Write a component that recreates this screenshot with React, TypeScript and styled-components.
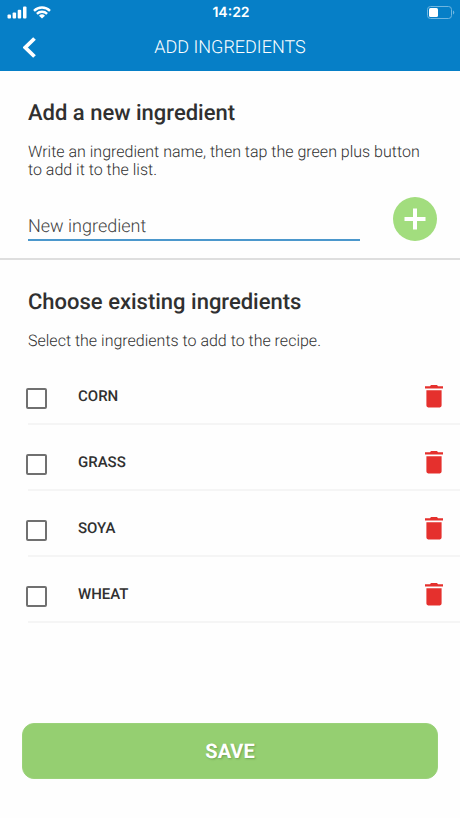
import { useState } from "react";
import type { FormEvent } from "react";
import styled, { createGlobalStyle } from "styled-components";

const GlobalStyle = createGlobalStyle`
  *, *::before, *::after { box-sizing: border-box; }
  body {
    margin: 0;
    background: #fefefe;
    color: #303030;
    font-family: Roboto, "Liberation Sans", sans-serif;
    text-rendering: geometricPrecision;
  }
  button, input { font: inherit; text-rendering: inherit; }
`;

const Screen = styled.div`
  display: flex;
  flex-direction: column;
  min-height: 100vh;
`;

const TopBar = styled.header`
  background: #067fc7;
  color: #fff;
`;

const StatusBar = styled.div`
  display: grid;
  grid-template-columns: 1fr auto 1fr;
  align-items: center;
  height: 24px;
  padding: 0 5px 0 7px;
`;

const Signals = styled.div`
  display: flex;
  align-items: center;
  gap: 6px;
`;

const Clock = styled.time`
  font-family: Inter, Roboto, sans-serif;
  font-size: 14px;
  font-weight: 600;
`;

const Battery = styled.svg`
  justify-self: end;
`;

const NavBar = styled.div`
  display: grid;
  grid-template-columns: 60px 1fr 60px;
  align-items: center;
  height: 47px;
`;

const IconButton = styled.button`
  display: flex;
  align-items: center;
  justify-content: center;
  padding: 0;
  border: 0;
  background: none;
  color: inherit;
  cursor: pointer;
`;

const BackButton = styled(IconButton)`
  height: 44px;
`;

const PageTitle = styled.h1`
  margin: 0;
  font-size: 18px;
  line-height: 22px;
  font-weight: 300;
  text-align: center;
`;

const Section = styled.section<{ $divided?: boolean }>`
  padding: 29px 0 ${(p) => (p.$divided ? 17 : 0)}px 28px;
  border-bottom: ${(p) => (p.$divided ? "2px solid #dedede" : "0")};
`;

const Heading = styled.h2`
  margin: 0;
  font-size: 22px;
  line-height: 28px;
  font-weight: 500;
`;

const Hint = styled.p`
  margin: 15px 36px 0 0;
  font-size: 16px;
  line-height: 18px;
  font-weight: 300;
`;

const AddForm = styled.form`
  display: flex;
  align-items: center;
  justify-content: space-between;
  gap: 33px;
  margin-top: 18px;
  padding-right: 23px;
`;

const NameInput = styled.input`
  flex: 1;
  min-width: 0;
  height: 44px;
  padding: 16px 0 0;
  border: 0;
  border-bottom: 2px solid #4b97cc;
  border-radius: 0;
  outline: 0;
  background: none;
  color: #303030;
  font-size: 18px;
  font-weight: 300;

  &::placeholder { color: #424242; opacity: 1; }
`;

const AddButton = styled(IconButton)`
  width: 44px;
  height: 44px;
  border-radius: 50%;
  background: #a2dd7e;
  color: #fff;
`;

const List = styled.ul`
  margin: 9px 0 0;
  padding: 0;
  list-style: none;
`;

const Row = styled.li`
  display: flex;
  align-items: center;
  height: 66px;
  padding: 10px 17px 0 0;
  border-bottom: 2px solid #f5f5f5;
`;

const RowLabel = styled.label`
  display: flex;
  flex: 1;
  align-items: center;
  gap: 31px;
  cursor: pointer;
`;

const Checkbox = styled.input`
  appearance: none;
  width: 21px;
  height: 21px;
  margin: 4px 0 0 -2px;
  border: 2px solid #707070;
  border-radius: 2px;
  background: #fff;

  &:checked { background: #067fc7; border-color: #067fc7; }
`;

const Name = styled.span`
  font-size: 15px;
  line-height: 22px;
  font-weight: 500;
`;

const DeleteButton = styled(IconButton)`
  width: 18px;
  height: 24px;
  color: #e5302d;
`;

const Footer = styled.footer`
  margin-top: auto;
  padding: 24px 22px 39px;
`;

const SaveButton = styled.button`
  width: 100%;
  height: 56px;
  padding: 0;
  border: 1px solid #9bd27a;
  border-radius: 12px;
  background: #95cf71;
  color: #fff;
  font-size: 20px;
  font-weight: 700;
  text-shadow: 1px 1px 2px rgba(60, 100, 40, 0.4);
  cursor: pointer;
`;

const SignalIcon = () => (
  <svg width="20" height="13" viewBox="0 0 20 13" fill="currentColor" aria-hidden="true">
    <rect x="0.5" y="8.5" width="3.5" height="4" rx="1" />
    <rect x="5.6" y="6.5" width="3.5" height="6" rx="1" />
    <rect x="10.7" y="3.8" width="3.5" height="8.7" rx="1" />
    <rect x="16" y="0.5" width="3.5" height="12" rx="1" />
  </svg>
);

const WifiIcon = () => (
  <svg width="18" height="13" viewBox="0 0 18 13" fill="none" stroke="currentColor" strokeWidth="2.4" aria-hidden="true">
    <path d="M1 4.8a11.4 11.4 0 0 1 16 0" />
    <path d="M3.9 7.9a7.2 7.2 0 0 1 10.2 0" />
    <path d="M9 12.6 6 9.8a4.3 4.3 0 0 1 6 0Z" fill="currentColor" stroke="none" />
  </svg>
);

const TrashIcon = () => (
  <svg width="18" height="24" viewBox="0 0 18 24" fill="currentColor" aria-hidden="true">
    <path d="M0 2.2h5L6 1h6l1 1.2h5V4.6H0Z" />
    <path d="M1.4 6.2h15.2v15.4a1.8 1.8 0 0 1-1.8 1.8H3.2a1.8 1.8 0 0 1-1.8-1.8Z" />
  </svg>
);

export default function App() {
  const [items, setItems] = useState(["CORN", "GRASS", "SOYA", "WHEAT"]);
  const [draft, setDraft] = useState("");

  const addItem = (event: FormEvent) => {
    event.preventDefault();
    const name = draft.trim().toUpperCase();
    if (name && !items.includes(name)) setItems([...items, name]);
    setDraft("");
  };

  return (
    <Screen>
      <GlobalStyle />
      <TopBar>
        <StatusBar>
          <Signals>
            <SignalIcon />
            <WifiIcon />
          </Signals>
          <Clock>14:22</Clock>
          <Battery width="28" height="13" viewBox="0 0 28 13" aria-hidden="true">
            <rect x="0.5" y="0.5" width="24" height="12" rx="3" fill="none" stroke="#6fb6e0" />
            <rect x="2" y="2" width="9" height="9" rx="1.5" fill="#fff" />
            <path d="M26 4.5v4a2.2 2.2 0 0 0 0-4Z" fill="#6fb6e0" />
          </Battery>
        </StatusBar>
        <NavBar>
          <BackButton type="button" aria-label="Back">
            <svg width="14" height="22" viewBox="0 0 14 22" fill="none" stroke="currentColor" strokeWidth="3.8" aria-hidden="true">
              <path d="M11.5 1.5 2.3 10.5 11.5 19.5" />
            </svg>
          </BackButton>
          <PageTitle>ADD INGREDIENTS</PageTitle>
        </NavBar>
      </TopBar>
      <main>
        <Section $divided>
          <Heading>Add a new ingredient</Heading>
          <Hint>Write an ingredient name, then tap the green plus button to add it to the list.</Hint>
          <AddForm onSubmit={addItem}>
            <NameInput
              type="text"
              aria-label="New ingredient"
              placeholder="New ingredient"
              value={draft}
              onChange={(event) => setDraft(event.target.value)}
            />
            <AddButton type="submit" aria-label="Add ingredient">
              <svg width="22" height="22" viewBox="0 0 22 22" fill="none" stroke="currentColor" strokeWidth="4" aria-hidden="true">
                <path d="M11 0.5v21M0.5 11h21" />
              </svg>
            </AddButton>
          </AddForm>
        </Section>
        <Section>
          <Heading>Choose existing ingredients</Heading>
          <Hint>Select the ingredients to add to the recipe.</Hint>
          <List>
            {items.map((item) => (
              <Row key={item}>
                <RowLabel>
                  <Checkbox type="checkbox" />
                  <Name>{item}</Name>
                </RowLabel>
                <DeleteButton
                  type="button"
                  aria-label={`Delete ${item}`}
                  onClick={() => setItems(items.filter((other) => other !== item))}
                >
                  <TrashIcon />
                </DeleteButton>
              </Row>
            ))}
          </List>
        </Section>
      </main>
      <Footer>
        <SaveButton type="button">SAVE</SaveButton>
      </Footer>
    </Screen>
  );
}
